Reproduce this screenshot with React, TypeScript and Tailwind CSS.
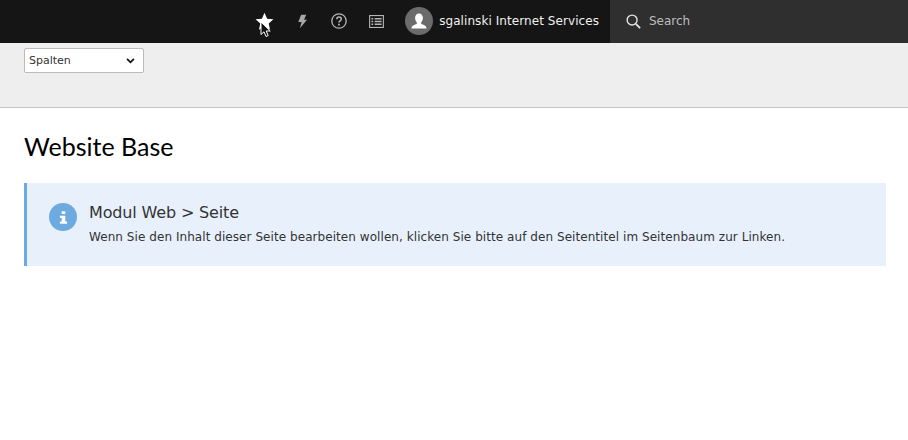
const StarIcon = () => (
  <svg viewBox="0 0 24 24" className="w-[19px] h-[19px] fill-white">
    <path d="M12 1l3.300 7.400 8 .8-6 5.400 1.700 7.900-7-4.100-7 4.100 1.700-7.900-6-5.400 8-.8z" />
  </svg>
);

const ZapIcon = () => (
  <svg viewBox="0 0 12 16" className="w-[10px] h-[15px] fill-[#a8a8a8]">
    <path d="M5 0h6L8.500 6H12L3.500 16l2-7.500H1.500z" />
  </svg>
);

const HelpIcon = () => (
  <svg viewBox="0 0 16 16" className="w-4 h-4" fill="none" stroke="#b5b5b5">
    <circle cx="8" cy="8" r="7.200" strokeWidth="1.300" />
    <path d="M5.700 6.200c0-1.400 1-2.200 2.300-2.200s2.300.8 2.300 2c0 1.900-2.300 1.900-2.300 3.600" strokeWidth="1.500" />
    <path d="M8 10.800v1.600" strokeWidth="1.700" />
  </svg>
);

const ListIcon = () => (
  <svg viewBox="0 0 16 14" className="w-[15px] h-[13px]" fill="none" stroke="#b5b5b5">
    <rect x="0.600" y="0.600" width="14.800" height="12.800" strokeWidth="1.200" />
    <path d="M2.500 4h2M6 4h7.500M2.500 7h2M6 7h7.500M2.500 10h2M6 10h7.500" strokeWidth="1.700" />
  </svg>
);

const Avatar = () => (
  <div className="w-7 h-7 rounded-full bg-[#6b6b6b] overflow-hidden flex items-end justify-center">
    <svg viewBox="0 0 28 28" className="w-7 h-7 fill-white">
      <path d="M14 6.500c2.400 0 3.900 1.900 3.900 4.400 0 1.900-.8 3.400-1.700 4.300v1.500c0 .6 5.300 1.400 5.300 4.300v.5h-15v-.5c0-2.900 5.300-3.700 5.300-4.300v-1.500c-.9-.9-1.700-2.400-1.700-4.300 0-2.500 1.500-4.400 3.900-4.400z" />
    </svg>
  </div>
);

const SearchIcon = () => (
  <svg viewBox="0 0 16 16" className="w-[15px] h-[15px]" fill="none" stroke="#e4e4e4">
    <circle cx="6.500" cy="6.500" r="5.300" strokeWidth="1.500" />
    <path d="M10.500 10.500l4.500 4.500" strokeWidth="2" />
  </svg>
);

const InfoGlyph = () => (
  <svg viewBox="0 0 10 14" className="w-[9px] h-[13px] fill-white">
    <path d="M3 0h4v3H3zM1 5h6v6.500h2V14H1v-2.500h2V7.500H1z" />
  </svg>
);

const Cursor = () => (
  <svg viewBox="0 0 12 17" className="absolute left-[260px] top-[21px] w-[12px] h-[17px]">
    <path d="M1 1v12.500l3-2.700 2 4.700 2.200-.9-2-4.600h4z" fill="#111" stroke="#fff" strokeWidth="1" />
  </svg>
);

const App = () => {
  return (
    <div className="relative w-full h-screen bg-white overflow-hidden font-['DejaVu_Sans',sans-serif]">
      <div className="h-[43px] flex justify-end bg-[#151515]">
        <div className="flex items-center pb-[1px]">
          <div className="w-[19px] flex justify-center mr-[23px]">
            <StarIcon />
          </div>
          <div className="mr-[24px]">
            <ZapIcon />
          </div>
          <div className="mr-[22px]">
            <HelpIcon />
          </div>
          <div className="mr-[21px]">
            <ListIcon />
          </div>
          <Avatar />
          <span className="ml-[6px] mr-[11px] text-[12px] tracking-[0.07px] text-[#f0f0f0]">
            sgalinski Internet Services
          </span>
        </div>
        <div className="w-[298px] bg-[#2f2f2f] flex items-center pl-[16px] gap-[8px] pb-[1px]">
          <SearchIcon />
          <span className="text-[12px] text-[#bdbdbd]">Search</span>
        </div>
      </div>

      <div className="h-[65px] bg-[#eeeeee] border-b border-[#c4c4c4] px-6 pt-[5px]">
        <div className="w-[120px] h-[25px] bg-white border border-[#bbbbbb] rounded-[2px] flex items-center justify-between pl-[4px] pr-[8px] pt-[1px]">
          <span className="text-[11px] text-[#333333]">Spalten</span>
          <svg viewBox="0 0 10 7" className="w-[9px] h-[6px]" fill="none" stroke="#111" strokeWidth="2">
            <path d="M1 1l4 4 4-4" />
          </svg>
        </div>
      </div>

      <div className="px-6 pt-[20px]">
        <h1 className="text-[25px] leading-[36px] text-black font-['Lato',sans-serif]">
          Website Base
        </h1>
        <div className="mt-[19px] w-[862px] h-[83px] bg-[#e8f1fb] border-l-[3px] border-[#6daae0] flex items-start pl-[22px] pt-[20px]">
          <div className="w-7 h-7 rounded-full bg-[#6daae0] flex items-center justify-center shrink-0">
            <InfoGlyph />
          </div>
          <div className="ml-[12px] text-[#333333]">
            <div className="text-[16px] tracking-[-0.15px] leading-[18px] mt-[1px]">Modul Web &gt; Seite</div>
            <p className="mt-[8px] text-[12px] tracking-[0.06px] leading-[15px]">
              Wenn Sie den Inhalt dieser Seite bearbeiten wollen, klicken Sie bitte auf den Seitentitel im Seitenbaum zur Linken.
            </p>
          </div>
        </div>
      </div>

      <Cursor />
    </div>
  );
};

export default App;
